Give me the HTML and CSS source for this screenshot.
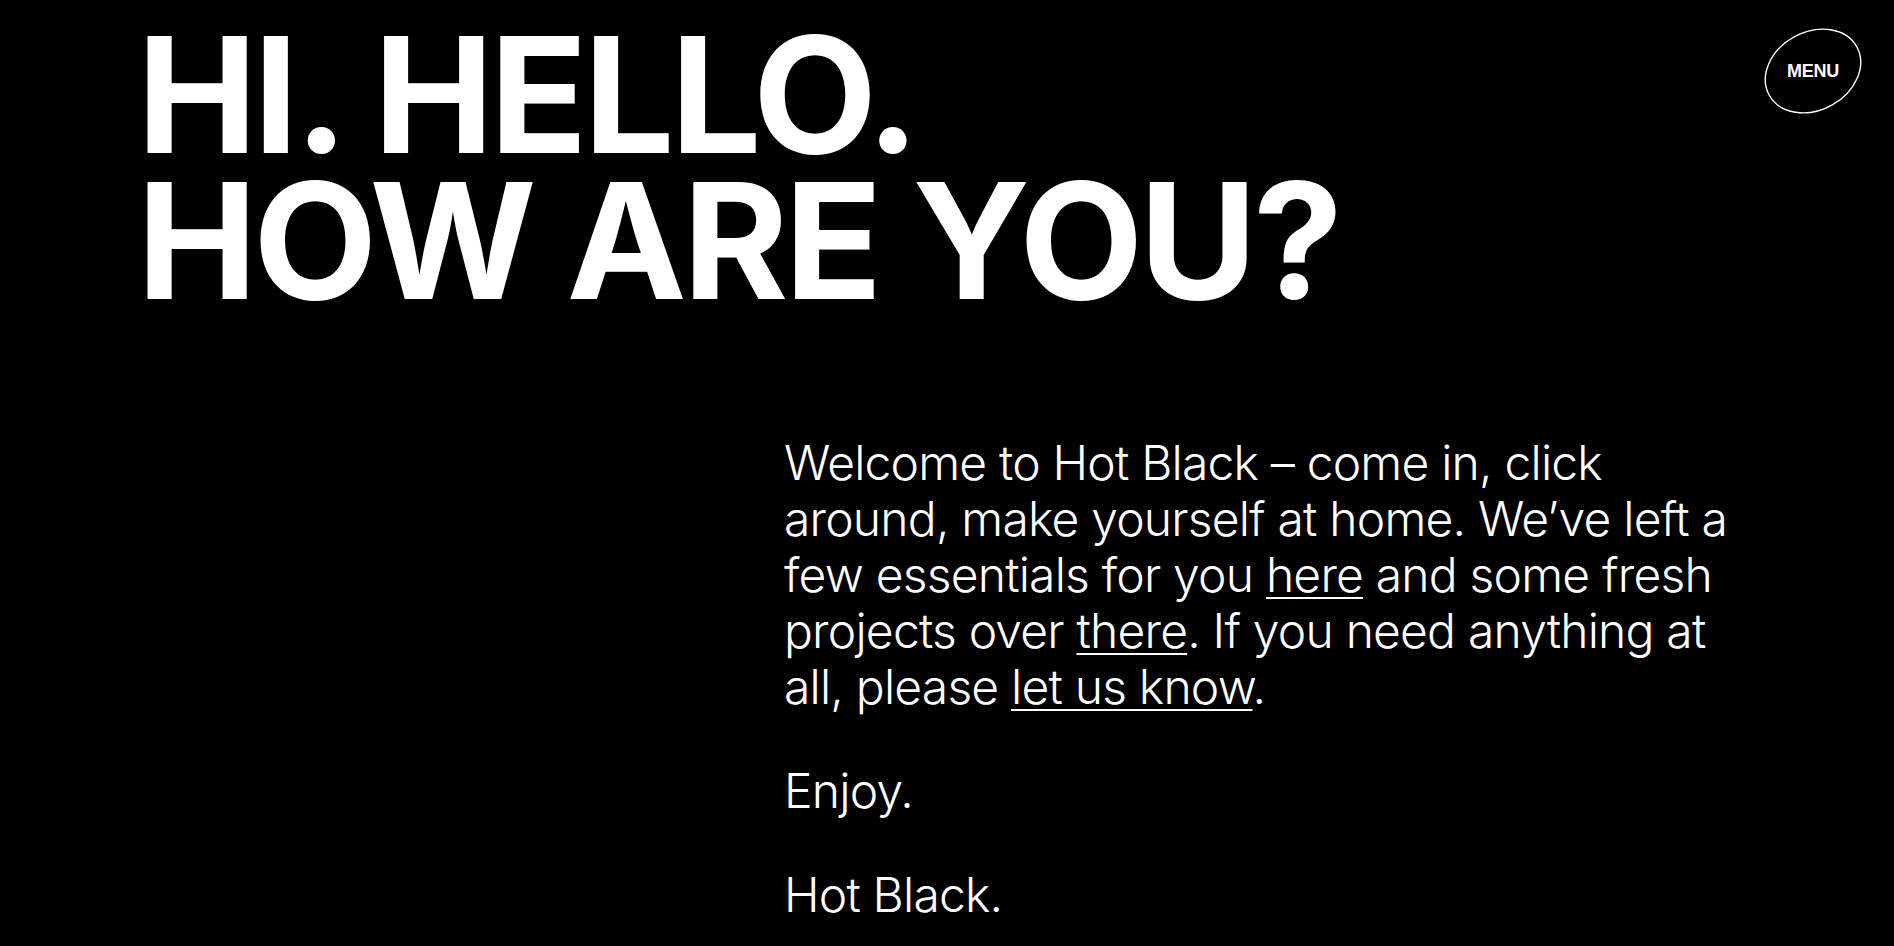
FILE: index.html
```html
<!DOCTYPE html>
<html lang="en">
<head>
<meta charset="utf-8">
<title>Hot Black</title>
<link rel="stylesheet" href="styles.css">
</head>
<body>
<div class="page">
  <header class="top">
    <h1 class="title">HI. HELLO.<br>HOW ARE YOU?</h1>
    <button class="menu" type="button">
      <svg class="menu-ring" viewBox="0 0 100 90" width="100" height="90" aria-hidden="true">
        <ellipse cx="50" cy="45" rx="50" ry="39" transform="rotate(-29 50 45)" fill="none" stroke="#fff" stroke-width="1.4"/>
      </svg>
      <span class="menu-label">MENU</span>
    </button>
  </header>
  <main class="intro">
    <p>Welcome to Hot Black – come in, click around, make yourself at home. We’ve left a few essentials for you <a href="#">here</a> and some fresh projects over <a href="#">there</a>. If you need anything at all, please <a href="#">let us know</a>.</p>
    <p>Enjoy.</p>
    <p>Hot Black.</p>
  </main>
</div>
</body>
</html>
```
FILE: styles.css
```css
html, body {
  margin: 0;
  padding: 0;
  background: #000;
  color: #fff;
}
body {
  font-family: Inter, "Liberation Sans", sans-serif;
  overflow: hidden;
}
.page {
  min-height: 946px;
}
.top {
  position: relative;
  padding: 22px 0 0 137px;
}
.title {
  margin: 0;
  font-family: Inter, "Liberation Sans", sans-serif;
  font-weight: 700;
  font-size: 161px;
  line-height: 146px;
  letter-spacing: -4px;
}
.menu {
  position: absolute;
  top: 26px;
  left: 1763px;
  width: 100px;
  height: 90px;
  padding: 0;
  border: 0;
  background: transparent;
  color: #fff;
  cursor: pointer;
  display: flex;
  align-items: center;
  justify-content: center;
}
.menu-ring {
  position: absolute;
  inset: 0;
  overflow: visible;
}
.menu-label {
  position: relative;
  font-family: "Liberation Sans", Arial, sans-serif;
  font-weight: 700;
  font-size: 18px;
  letter-spacing: -0.3px;
}
.intro {
  margin: 121px 0 0 784px;
  width: 960px;
  font-weight: 300;
  font-size: 48px;
  line-height: 56px;
  letter-spacing: -0.8px;
}
.intro p {
  margin: 0 0 48px;
}
.intro a {
  color: #fff;
  text-decoration: underline;
  text-decoration-thickness: 2px;
  text-underline-offset: 5px;
}
```
